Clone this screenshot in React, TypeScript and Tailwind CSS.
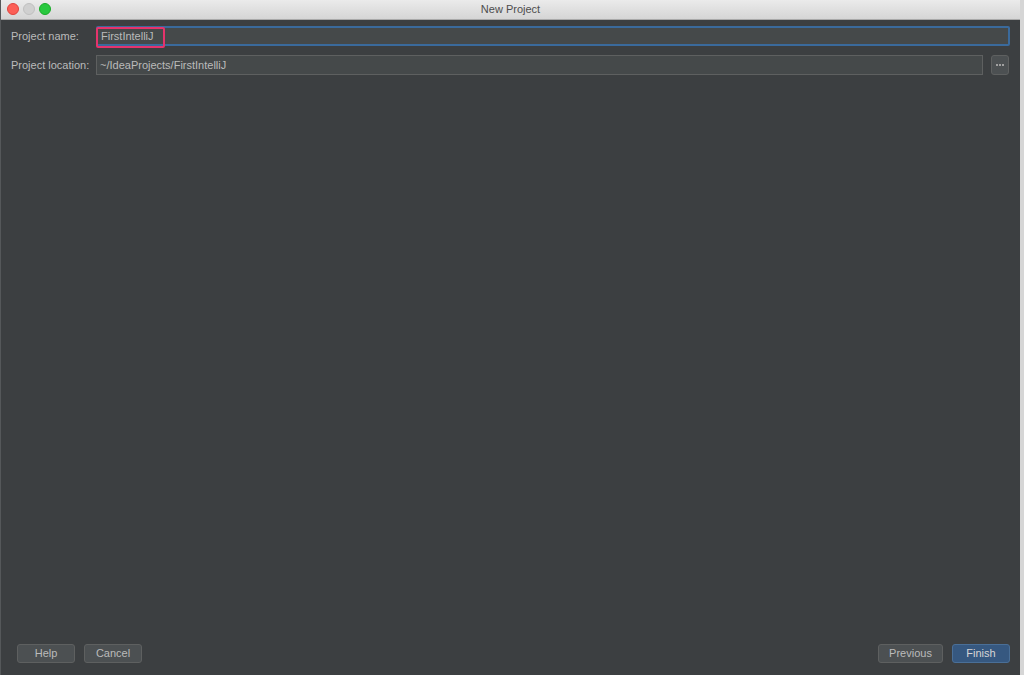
const font = "font-['Liberation_Sans',Arial,sans-serif]"

function DialogButton({ label, primary, className }: { label: string; primary?: boolean; className?: string }) {
  return (
    <button
      className={`h-[19px] rounded-[3px] border text-[11px] leading-none ${
        primary
          ? "bg-[#365880] border-[#4a6f97] text-[#d6d6d6]"
          : "bg-[#4c5052] border-[#5e6060] text-[#bbbbbb]"
      } ${className ?? ""}`}
    >
      {label}
    </button>
  )
}

export default function App() {
  return (
    <div className={`w-[1024px] h-[675px] flex bg-[#d6d6d6] ${font}`}>
      <div className="w-[1020px] h-full flex flex-col border-l border-[#55585a]">
        {/* title bar */}
        <div className="relative h-[20px] shrink-0 bg-gradient-to-b from-[#ebebeb] to-[#d5d5d5] border-b border-[#a9a9a9] flex items-center justify-center">
          <div className="absolute left-[6px] top-[3px] flex gap-[4px]">
            <span className="w-[12px] h-[12px] rounded-full bg-[#fc5f57] border border-[#e0443e]" />
            <span className="w-[12px] h-[12px] rounded-full bg-[#d0d0d0] border border-[#c0c0c0]" />
            <span className="w-[12px] h-[12px] rounded-full bg-[#29c83f] border border-[#1aab29]" />
          </div>
          <span className="text-[11px] text-[#4d4d4d]">New Project</span>
        </div>

        {/* body */}
        <div className="flex-1 flex flex-col bg-[#3c3f41] pt-[6px] pb-[12px] pl-[10px] pr-[10px]">
          <div className="flex flex-col gap-[9px]">
            <div className="flex items-center">
              <span className="w-[85px] shrink-0 text-[11px] text-[#bbbbbb]">Project name:</span>
              <div className="relative flex-1 h-[20px] bg-[#45494a] border-2 border-[#3a6a9c] rounded-[2px] flex items-center pl-[3px] text-[11px] text-[#bbbbbb]">
                FirstIntelliJ
                <span className="absolute -left-[2px] -top-[1px] w-[69px] h-[21px] border-2 border-[#e5336c] rounded-[2px]" />
              </div>
            </div>
            <div className="flex items-center">
              <span className="w-[85px] shrink-0 text-[11px] text-[#bbbbbb]">Project location:</span>
              <div className="flex-1 h-[20px] bg-[#45494a] border border-[#5e6060] flex items-center pl-[3px] text-[11px] text-[#bbbbbb]">
                ~/IdeaProjects/FirstIntelliJ
              </div>
              <button className="ml-[8px] mr-[1px] w-[18px] h-[20px] rounded-[3px] bg-[#4c5052] border border-[#5e6060] flex items-center justify-center gap-[1px]">
                <span className="w-[2px] h-[2px] bg-[#a0a0a0]" />
                <span className="w-[2px] h-[2px] bg-[#a0a0a0]" />
                <span className="w-[2px] h-[2px] bg-[#a0a0a0]" />
              </button>
            </div>
          </div>

          <div className="flex-1" />

          <div className="flex items-center pl-[6px]">
            <DialogButton label="Help" className="w-[58px]" />
            <DialogButton label="Cancel" className="w-[58px] ml-[9px]" />
            <div className="flex-1" />
            <DialogButton label="Previous" className="w-[65px]" />
            <DialogButton label="Finish" primary className="w-[58px] ml-[9px]" />
          </div>
        </div>
      </div>
      <div className="w-[4px] h-full bg-[#d6d6d6]" />
    </div>
  )
}
